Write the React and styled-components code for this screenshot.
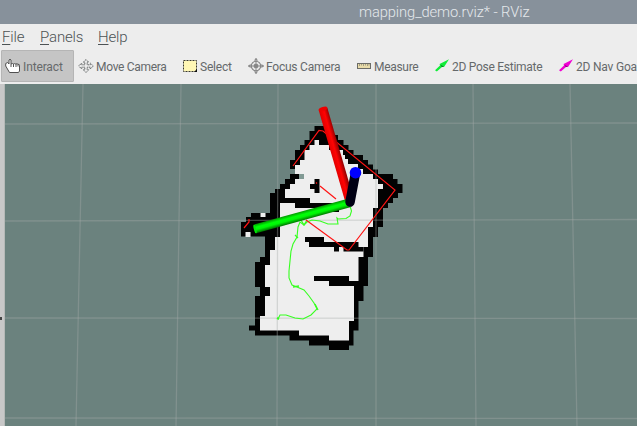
import React from "react";
import styled, { createGlobalStyle } from "styled-components";

const GlobalStyle = createGlobalStyle`
  * { box-sizing: border-box; }
  body { margin: 0; overflow: hidden; }
`;

const Window = styled.div`
  width: 637px;
  height: 426px;
  overflow: hidden;
  display: flex;
  flex-direction: column;
  background: #ededed;
  color: #4c5254;
  font-family: Roboto, "Liberation Sans", sans-serif;
  font-weight: 300;
`;

const TitleBar = styled.header`
  flex: none;
  height: 24px;
  padding-left: 359px;
  background: #87919b;
  color: #e4e8eb;
  font-size: 14.7px;
  letter-spacing: -0.08px;
  line-height: 24px;
  white-space: nowrap;
`;

const MenuBar = styled.nav`
  flex: none;
  height: 26px;
  padding-left: 2px;
  display: flex;
  font-size: 15px;
  line-height: 26px;
`;

const MenuItem = styled.span`
  flex: none;
  width: ${(p) => p.$width}px;
  letter-spacing: -0.15px;
`;

const Mnemonic = styled.u`
  text-decoration-thickness: 1px;
  text-underline-offset: 2px;
`;

const ToolBar = styled.div`
  flex: none;
  height: 34px;
  padding-left: 1px;
  display: flex;
`;

const Tool = styled.div`
  flex: none;
  width: ${(p) => p.$width}px;
  height: 32px;
  padding-left: 3px;
  display: flex;
  align-items: center;
  gap: 2px;
  border: 1px solid ${(p) => (p.$active ? "#b5b5b5" : "transparent")};
  border-radius: 1px;
  background: ${(p) => (p.$active ? "#c5c5c5" : "transparent")};
  font-size: 12px;
  font-weight: 400;
  color: #65696b;
  letter-spacing: ${(p) => p.$spacing || 0}px;
  white-space: nowrap;
  svg { flex: none; }
`;

const ToolLabel = styled.span`
  padding-top: 2px;
`;

const Workspace = styled.main`
  flex: 1;
  min-height: 0;
  display: flex;
`;

const Splitter = styled.div`
  width: 5px;
  border-right: 1px solid #b5b9b7;
  background: #c8c8c8;
  display: flex;
  align-items: flex-start;
  padding-top: 233px;
  &::before {
    content: "";
    width: 1.5px;
    height: 3px;
    background: #444;
  }
`;

const Viewport = styled.section`
  flex: 1;
  background: #6b827e;
  svg { display: block; }
`;

function Icon({ name }) {
  return (
    <svg width="16" height="16" viewBox="0 0 16 16">
      {name === "hand" && (
        <>
          <path d="M.7 5.500l2-1L4 6V2q1-1.600 2 0v4q1.500-1 2.500 0 1.200-.8 2.300 0 1.300-.6 2.200.3 1.500-.2 1.500 1V13l-1 1.500H4.500L.7 8z" fill="#fff" stroke="#505050" />
          <path d="M6 6v3M8.500 6v3M11 6v3M13 6.500v2" stroke="#505050" />
        </>
      )}
      {name === "move" && (
        <path d="M8 1.500l2.700 2.700H9.200v2.600h3.100V5l3 3-3 3V9.200H9.200v2.600h1.500L8 14.500l-2.700-2.700h1.500V9.200H3.700V11l-3-3 3-3v1.800h3.100V4.200H5.300z" fill="#ececec" stroke="#656969" strokeDasharray="1.500 .6" />
      )}
      {name === "select" && (
        <>
          <rect x="1.500" y="2.500" width="13" height="11" fill="#fff7b5" stroke="#38382f" strokeDasharray="2 1" />
          <path d="M15 11v3h-3z" fill="#111" />
        </>
      )}
      {name === "focus" && (
        <g fill="none" stroke="#858585">
          <circle cx="8" cy="8" r="4.700" strokeWidth="1.100" />
          <circle cx="8" cy="8" r="2" fill="#999" />
          <path d="M8 .5v15M.5 8h15" strokeWidth="1.300" />
          <path d="M6.500 2.500L8 .5l1.500 2M6.500 13.500L8 15.500l1.500-2M2.500 6.500L.5 8l2 1.500M13.500 6.500l2 1.500-2 1.500" />
          <circle cx="8" cy="8" r="3.200" stroke="#ddd" strokeWidth=".7" />
        </g>
      )}
      {name === "measure" && (
        <>
          <rect x="1.500" y="5.500" width="13" height="5" fill="#e9dcaa" stroke="#6c6c67" />
          <path d="M3.500 6v2M5.500 6v1.500M7.500 6v2M9.500 6v1.500M11.500 6v2M13 6v1.500" stroke="#777568" strokeWidth=".6" />
        </>
      )}
      {(name === "pose" || name === "goal") && (
        <>
          <path d="M1 12.200L6 7.500 5.600 6 15 1.300 10.200 8.700 8 9 2.800 13.400z" fill={name === "pose" ? "#10ed38" : "#f000d2"} />
          <path d="M6.500 6.800l3.700 1.900-2.500.2z" fill={name === "pose" ? "#087c25" : "#8c007e"} />
        </>
      )}
    </svg>
  );
}

const tools = [
  { icon: "hand", label: "Interact", width: 73, spacing: -0.13, active: true },
  { icon: "move", label: "Move Camera", width: 104, spacing: -0.3 },
  { icon: "select", label: "Select", width: 66, spacing: -0.2 },
  { icon: "focus", label: "Focus Camera", width: 108, spacing: -0.22 },
  { icon: "measure", label: "Measure", width: 78, spacing: -0.3 },
  { icon: "pose", label: "2D Pose Estimate", width: 124, spacing: -0.27 },
  { icon: "goal", label: "2D Nav Goal", width: 90, spacing: -0.2 },
];

const verticalLines = [
  "M83 84L76 426", "M181 84L176 426", "M278 84L277 426", "M376 84L376 426",
  "M473 84L476 426", "M570 84L577 426",
];
const horizontalLines = ["M5 124L637 123", "M5 221L637 219.500", "M5 318L637 318.500", "M5 418L637 418.500"];

const walls = "M314.500 126H325V131H334V135H338V140H343.500V145H348.500V150H353.500V155H363V160H368V164.500H373V169.500H378V174H393V179H397.500V184H402.500V193H398V198H393V203H388V208H383V227H378V237H373V257H368V286H363.500V301H358.500V330.500H353.500V345.500H349V350H329V345.500H309V340.500H289.500V335.500H255V330.500H249V325.500H255V296H260V287H255V262H260V257H265V236.500H241V222H246V217H251V213H270V193H275V189H280V184H285V179H290V174H295V169H290V160H295V150H300V145H304.500V140H309.500V131H314.500Z";
const floor = "M314.500 140H319V145H329V150H343V155H345V159H348V164H358V169H363V174H373V179H378V184H383V189H378V208H373V227H368V247H358.500V242H324V247H363.500V257H358.500V286H354V321H349V340.500H329V335.500H299V330.500H260V316H265V296H270V287H265V265H270V250H275V237H280V203H285V189H290V184H295V179H299V174H295V165H300V160H304.500V150H309.500V145H314.500Z";
const obstacles = [
  [280, 198, 30, 5], [295, 203, 38, 5], [320, 207, 19, 5],
  [314.5, 179, 5, 14], [310, 184, 5, 5],
  [305, 237, 19, 5], [309, 242, 49, 5], [334, 247, 5, 4.5], [343.5, 247, 20, 4.5],
  [314, 276, 35, 5], [329, 281, 30, 5],
];

function MapScene() {
  return (
    <svg width="632" height="342" viewBox="5 84 632 342">
      <defs>
        <linearGradient id="red" gradientUnits="userSpaceOnUse" x1="332" y1="157" x2="341" y2="154.500">
          <stop stopColor="#e00000" /><stop offset=".5" stopColor="#ff0303" /><stop offset="1" stopColor="#900000" />
        </linearGradient>
        <linearGradient id="green" gradientUnits="userSpaceOnUse" x1="300.800" y1="211.700" x2="303.200" y2="220.500">
          <stop stopColor="#009800" /><stop offset=".35" stopColor="#00ff08" /><stop offset=".6" stopColor="#00f506" /><stop offset="1" stopColor="#006c00" />
        </linearGradient>
      </defs>
      <path d={walls} fill="#020202" />
      <path d={floor} fill="#eee" />
      <rect x="299" y="174" width="5" height="5" fill="#819a94" />
      {obstacles.map(([x, y, width, height]) => (
        <rect key={`${x}-${y}`} x={x} y={y} width={width} height={height} fill="#020202" />
      ))}
      <path d="M260.500 213h5v4h-5zM245.500 232h5v5h-5z" fill="#eee" />
      <g fill="none" stroke="#a5aaa7" strokeOpacity=".38" strokeWidth="1.300">
        {[...verticalLines, ...horizontalLines].map((d) => <path key={d} d={d} />)}
      </g>
      <g fill="none" stroke="#36ff20" strokeWidth="1.100">
        <path d="M350 206L351.500 211 350 216 346 218.500 338 219 337 218 338 224 328 224 320 221 312 220 307 222 304 225 300 222 298 227 297 237 293 244 291 251 290 261 289 271 289 278 292 285 297 287 304 290 309 296 314 303 317 309 311 315 303 319 295 318 286 315 280 315 278 319" />
        <path d="M301 220L304 225 307 220M295 235L298 238M293 287L299 286M315 304L318 310" strokeWidth="1.300" />
        <path d="M277 318l2 1" strokeWidth="2" />
      </g>
      <g fill="none" stroke="#ff1414" strokeWidth="1.200">
        <path d="M293 166L319 130.500 323 131 395 190 349 250 347 250 306 220" />
        <path d="M320 186L336 199M249 219v3l-5 6" />
        <path d="M316 182.500l1 1" />
      </g>
      <path d="M323 109L350 202" stroke="url(#red)" strokeWidth="9" />
      <ellipse cx="323" cy="109" rx="4.500" ry="2" transform="rotate(-16 323 109)" fill="#ee0000" />
      <path d="M255 229L349 203" stroke="url(#green)" strokeWidth="9" />
      <ellipse cx="255" cy="229" rx="1.200" ry="4.500" transform="rotate(-15 255 229)" fill="#00e905" />
      <path d="M350 202L355.500 173" stroke="#000014" strokeWidth="9.500" strokeLinecap="round" />
      <circle cx="355.500" cy="172.700" r="5.800" fill="#0000ff" />
    </svg>
  );
}

export default function App() {
  return (
    <>
      <GlobalStyle />
      <Window>
        <TitleBar>mapping_demo.rviz* - RViz</TitleBar>
        <MenuBar>
          <MenuItem $width={38}><Mnemonic>F</Mnemonic>ile</MenuItem>
          <MenuItem $width={58}><Mnemonic>P</Mnemonic>anels</MenuItem>
          <MenuItem $width={50}><Mnemonic>H</Mnemonic>elp</MenuItem>
        </MenuBar>
        <ToolBar>
          {tools.map((tool) => (
            <Tool key={tool.icon} $width={tool.width} $active={tool.active} $spacing={tool.spacing}>
              <Icon name={tool.icon} />
              <ToolLabel>{tool.label}</ToolLabel>
            </Tool>
          ))}
        </ToolBar>
        <Workspace><Splitter /><Viewport><MapScene /></Viewport></Workspace>
      </Window>
    </>
  );
}
